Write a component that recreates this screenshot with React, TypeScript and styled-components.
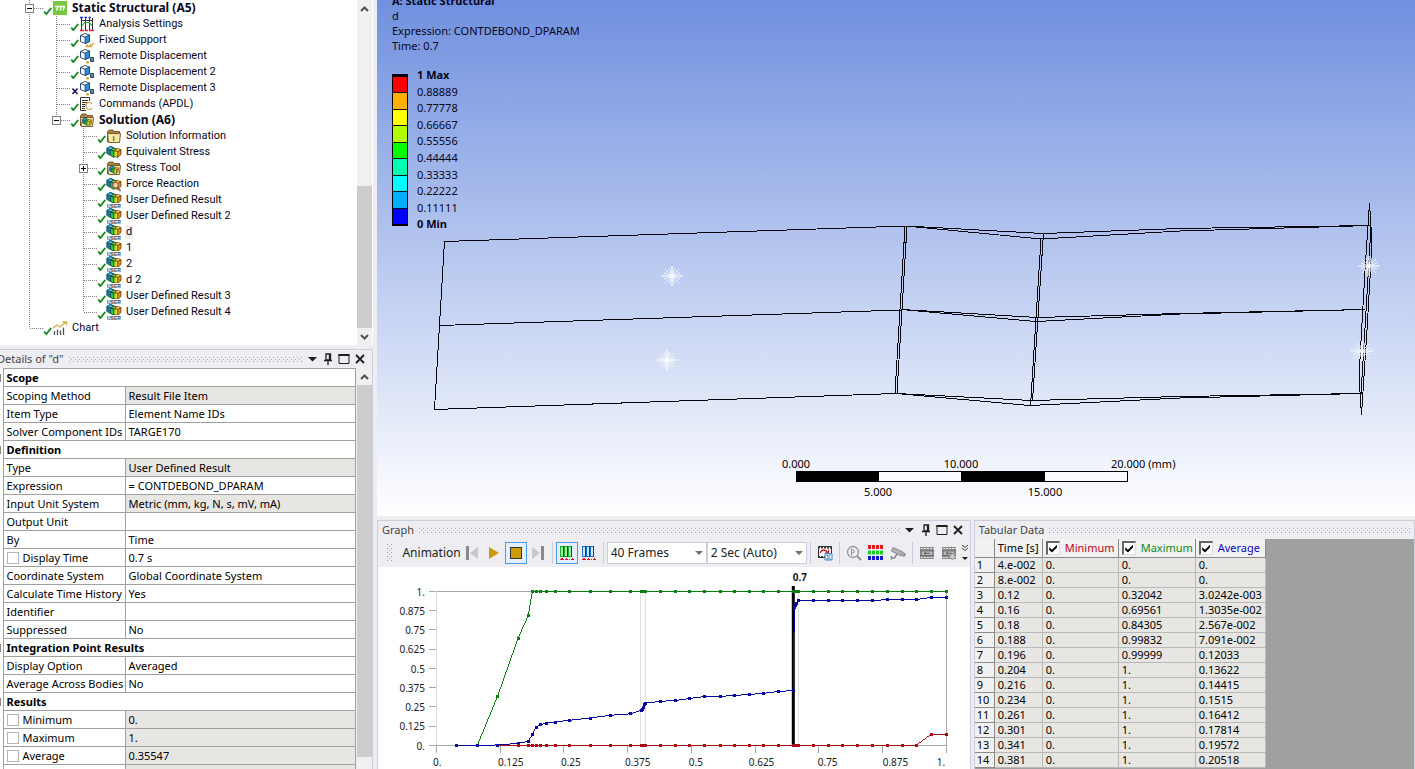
import React from 'react';
import styled, { createGlobalStyle } from 'styled-components';

const SHELL = '#eeeef2';
const LINE = '#cccedb';
const GRID = '#a0a0a0';

const GlobalStyle = createGlobalStyle`
  *, *::before, *::after { box-sizing: border-box; }
  html, body { margin: 0; height: 100%; overflow: hidden; }
  body { background: ${SHELL}; color: #000; font: 11px/16px "Noto Sans", "Open Sans", sans-serif; }
  button { font: inherit; color: inherit; margin: 0; padding: 0; border: 0; background: none; }
  svg { display: block; }
`;

const Shell = styled.div`
  display: flex;
  gap: 4px;
  height: 100vh;
  overflow: hidden;
`;

const Sidebar = styled.aside`
  display: flex;
  flex-direction: column;
  flex: 0 0 373px;
  gap: 4px;
  min-height: 0;
`;

const Workspace = styled.main`
  display: flex;
  flex-direction: column;
  flex: 1;
  gap: 4px;
  min-width: 0;
`;

/* ---------- scroll bar ---------- */

const Track = styled.div`
  display: flex;
  flex-direction: column;
  flex: 0 0 15px;
  background: #f0f0f0;
`;
const ScrollButton = styled.button`
  display: flex;
  align-items: center;
  justify-content: center;
  flex: 0 0 17px;
`;
const ThumbArea = styled.div<{ $before: number; $after: number }>`
  flex: 1;
  display: flex;
  padding: ${p => p.$before}px 0 ${p => p.$after}px;
`;
const Thumb = styled.div`
  flex: 1;
  background: #cdcdcd;
`;

function ScrollBar({ before, after, label, open }: { before: number; after: number; label: string; open?: boolean }) {
  return (
    <Track>
      <ScrollButton aria-label={`Scroll ${label} up`}>
        <svg width="9" height="6" viewBox="0 0 9 6"><path d="M1 5 4.500 1.500 8 5" fill="none" stroke="#505050" strokeWidth="2" /></svg>
      </ScrollButton>
      <ThumbArea $before={before} $after={after}><Thumb /></ThumbArea>
      {!open && (
        <ScrollButton aria-label={`Scroll ${label} down`}>
          <svg width="9" height="6" viewBox="0 0 9 6"><path d="M1 1 4.500 4.500 8 1" fill="none" stroke="#505050" strokeWidth="2" /></svg>
        </ScrollButton>
      )}
    </Track>
  );
}

/* ---------- outline tree ---------- */

const TreePanel = styled.section`
  display: flex;
  flex: 0 0 auto;
  padding-right: 1px;
  background: #fff;
`;
const TreeList = styled.ul`
  flex: 1;
  margin: 0;
  padding: 0 0 9px 16px;
  list-style: none;
  background: #fff;
`;
const TreeRow = styled.li`
  display: flex;
  align-items: center;
  height: 16px;
`;
const Status = styled.span`
  flex: 0 0 9px;
`;
const IconCell = styled.span`
  flex: 0 0 16px;
  margin-right: 3px;
`;
const TreeLabel = styled.span<{ $bold?: boolean; $selected?: boolean }>`
  padding: 0 1px;
  font: ${p => (p.$bold ? '700 12px/14px "Noto Sans"' : '400 11px/14px Roboto')}, sans-serif;
  color: #08081c;
  white-space: nowrap;
  background: ${p => (p.$selected ? '#efefef' : 'transparent')};
`;

function Branch({ up, down, across, box }: { up?: boolean; down?: boolean; across?: boolean; box?: '+' | '-' }) {
  return (
    <svg width="27" height="16" viewBox="0 0 27 16" shapeRendering="crispEdges">
      <g stroke="#808080" strokeDasharray="1 1">
        {up && <path d="M13.500 0V8" />}
        {down && <path d="M13.500 8V16" />}
        {across && <path d="M14 8.500H27" />}
      </g>
      {box && (
        <g>
          <rect x="9.500" y="4.500" width="8" height="8" fill="#fff" stroke="#808080" />
          <path d={box === '+' ? 'M11 8.500H16M13.500 6V11' : 'M11 8.500H16'} stroke="#000" />
        </g>
      )}
    </svg>
  );
}

const Tick = () => (
  <svg width="9" height="16" viewBox="0 0 9 16"><path d="M1.200 11.500 3.300 14 8.200 8" fill="none" stroke="#168a22" strokeWidth="1.900" /></svg>
);
const Cross = () => (
  <svg width="9" height="16" viewBox="0 0 9 16"><path d="M2.500 8.500 7.500 14M7.500 8.500 2.500 14" fill="none" stroke="#14145e" strokeWidth="1.500" /></svg>
);

type IconKind = 'static' | 'settings' | 'fixed' | 'remote' | 'commands' | 'solution' | 'info' | 'stress' | 'force' | 'user' | 'chart';

const Blocks = () => (
  <g strokeWidth=".8" strokeLinejoin="round">
    <path d="M.8 3.500 4.500 1.500 8 3 8 9 4.800 10.500.8 8.500Z" fill="#1378b4" stroke="#0b3f68" />
    <path d="M.8 3.500 4.500 1.500 8 3 4.500 5Z" fill="#43bfe0" stroke="#0b3f68" />
    <path d="M4.500 5 8 3 11 4 8 6Z" fill="#6adf4c" stroke="#174f24" />
    <path d="M4.500 5 8 6.500V12.500L4.500 10.500Z" fill="#2bc43f" stroke="#174f24" />
    <path d="M11.500 6.500 15 4.500V9.500L11.500 12.500Z" fill="#e78a16" stroke="#6d3d0a" />
    <path d="M8 5.500 11 3.500 15 4.500 12 6.500Z" fill="#f5d93b" stroke="#6d3d0a" />
    <path d="M8 5.800 11.700 6.500V12.300L8 11.500Z" fill="#c4e633" stroke="#4a5511" />
  </g>
);

const Cube = () => (
  <g strokeLinejoin="round">
    <path d="M1.500 3.500 5.500 1.500 10.500 3V9.500L6.500 11.500 1.500 9.500Z" fill="#fff" stroke="#274a6c" />
    <path d="M6 5.200 10.500 3V9.500L6.200 11.500Z" fill="#2f8fd8" stroke="#274a6c" />
    <path d="M1.500 3.500 6 5.200" stroke="#274a6c" />
  </g>
);

const Folder = () => (
  <g>
    <path d="M1.500 14V3.500L3 2H7L8 3.500H13.500V5" fill="#a88245" stroke="#7b5d2c" />
    <path d="M1.500 5.500H14.500L13.500 14.500H2.500Z" fill="#f8e6a4" stroke="#7b5d2c" />
  </g>
);

function TreeIcon({ kind }: { kind: IconKind }) {
  return (
    <svg width="16" height="16" viewBox="0 0 16 16" fill="none" fontFamily='"Liberation Sans", sans-serif' fontWeight="700">
      {kind === 'static' && (
        <g>
          <rect x="1" y="1" width="14" height="14" fill="#76c83c" />
          <path d="M3 6.500H13M6 6.500 4.500 10.500M9.500 6.500 8 10.500M12.500 6.500 11 10.500" stroke="#fff" strokeWidth="1.300" />
        </g>
      )}
      {kind === 'settings' && (
        <g>
          <path d="M2.500 2V14M6.500 2V14M10.500 2V14M13.500 2V14M2.500 4.500H13.500" stroke="#333" />
          <path d="M1 1.500H4M5.500 1.500H8M9.500 1.500H12" stroke="#2233cc" strokeWidth="1.500" />
          <path d="M3 10 5.500 6.500H10.500L13 10" stroke="#22bb44" strokeWidth="1.200" />
          <path d="M1 14.500H5M6 14.500H9M10 14.500H15" stroke="#dd2233" strokeWidth="1.500" />
        </g>
      )}
      {kind === 'fixed' && (
        <g><Cube /><path d="M6.500 15 9 12.500M9.500 15 12 12.500M12 14 15 11M7 14.500H13" stroke="#d9a53c" strokeWidth="1.300" /></g>
      )}
      {kind === 'remote' && (
        <g><Cube /><rect x="11.500" y="9.500" width="3" height="4" fill="#5c86ad" stroke="#31567c" /><path d="M8.500 13V15.500M7 14.500H10" stroke="#d9a53c" strokeWidth="1.700" /></g>
      )}
      {kind === 'commands' && (
        <g>
          <path d="M7 14.500H1.500V1.500H10.500V5" stroke="#333" />
          <path d="M3 4.500H9M3 6.500H8M3 8.500H6.500M3 10.500H6M3 12.500H6" stroke="#333" />
          <text x="6" y="14" fontSize="11" fontWeight="400" fill="#d09a30">C</text>
        </g>
      )}
      {(kind === 'solution' || kind === 'info') && <Folder />}
      {kind === 'solution' && <g transform="translate(3 5) scale(.64 .68)"><Blocks /></g>}
      {kind === 'info' && <text x="6.500" y="13" fontSize="8" fill="#6a5a2c">i</text>}
      {(kind === 'stress' || kind === 'force') && <g transform="translate(0 1)"><Blocks /></g>}
      {kind === 'force' && (
        <g><circle cx="9.500" cy="9" r="3" fill="#f6d9d9" fillOpacity=".7" stroke="#a04848" /><path d="M11.500 11.500 14.500 15" stroke="#8a4a3a" strokeWidth="1.500" /></g>
      )}
      {kind === 'user' && (
        <g>
          <g transform="translate(0 -1)"><Blocks /></g>
          <rect x="1" y="11" width="14" height="5" fill="#fff" />
          <text x="1" y="15.500" fontSize="5" fill="#333a45">USER</text>
        </g>
      )}
      {kind === 'chart' && (
        <g>
          <path d="M2.500 15V11M5.500 15V9.500M8.500 15V10.500M11.500 15V7.500" stroke="#555" strokeWidth="1.300" />
          <path d="M1 8 5 5 8 7 14 2M10.500 2H14.500V5" stroke="#d9a94c" strokeWidth="1.300" />
        </g>
      )}
    </svg>
  );
}

interface Node { label: string; depth: 1 | 2 | 3; icon: IconKind; bold?: boolean; box?: '+' | '-'; last?: boolean; off?: boolean; selected?: boolean }

const NODES: Node[] = [
  { label: 'Static Structural (A5)', depth: 1, icon: 'static', bold: true, box: '-' },
  { label: 'Analysis Settings', depth: 2, icon: 'settings' },
  { label: 'Fixed Support', depth: 2, icon: 'fixed' },
  { label: 'Remote Displacement', depth: 2, icon: 'remote' },
  { label: 'Remote Displacement 2', depth: 2, icon: 'remote' },
  { label: 'Remote Displacement 3', depth: 2, icon: 'remote', off: true },
  { label: 'Commands (APDL)', depth: 2, icon: 'commands' },
  { label: 'Solution (A6)', depth: 2, icon: 'solution', bold: true, box: '-', last: true },
  { label: 'Solution Information', depth: 3, icon: 'info' },
  { label: 'Equivalent Stress', depth: 3, icon: 'stress' },
  { label: 'Stress Tool', depth: 3, icon: 'solution', box: '+' },
  { label: 'Force Reaction', depth: 3, icon: 'force' },
  { label: 'User Defined Result', depth: 3, icon: 'user' },
  { label: 'User Defined Result 2', depth: 3, icon: 'user' },
  { label: 'd', depth: 3, icon: 'user', selected: true },
  { label: '1', depth: 3, icon: 'user' },
  { label: '2', depth: 3, icon: 'user' },
  { label: 'd 2', depth: 3, icon: 'user' },
  { label: 'User Defined Result 3', depth: 3, icon: 'user' },
  { label: 'User Defined Result 4', depth: 3, icon: 'user', last: true },
  { label: 'Chart', depth: 1, icon: 'chart', last: true },
];

function Outline() {
  return (
    <TreePanel aria-label="Outline">
      <TreeList>
        {NODES.map(n => (
          <TreeRow key={n.label}>
            {n.depth > 1 && <Branch up down />}
            {n.depth > 2 && <Branch />}
            <Branch up down={!n.last} across box={n.box} />
            <Status>{n.off ? <Cross /> : <Tick />}</Status>
            <IconCell><TreeIcon kind={n.icon} /></IconCell>
            <TreeLabel $bold={n.bold} $selected={n.selected}>{n.label}</TreeLabel>
          </TreeRow>
        ))}
      </TreeList>
      <ScrollBar before={169} after={0} label="outline" />
    </TreePanel>
  );
}

/* ---------- docked panel header ---------- */

const Panel = styled.section<{ $grow?: boolean }>`
  display: flex;
  flex-direction: column;
  flex: ${p => (p.$grow ? '1 1 0' : '0 0 auto')};
  min-width: 0;
  min-height: 0;
  border: solid ${LINE};
  border-width: 1px 1px 0 0;
  overflow: hidden;
`;
const PanelHead = styled.header`
  display: flex;
  align-items: center;
  flex: 0 0 18px;
  padding: 0 4px;
  color: #444;
`;
const PanelTitle = styled.h2<{ $cut?: boolean }>`
  margin: 0 5px 0 ${p => (p.$cut ? '-7px' : '0')};
  font: 400 11px/18px "Noto Sans", sans-serif;
  white-space: nowrap;
`;
const Dots = styled.span`
  flex: 1;
  height: 5px;
  background-image: linear-gradient(90deg, #a9a9b2 1px, transparent 1px), linear-gradient(90deg, #a9a9b2 1px, transparent 1px), linear-gradient(90deg, #a9a9b2 1px, transparent 1px);
  background-size: 4px 1px;
  background-position: 0 0, 2px 2px, 0 4px;
  background-repeat: repeat-x;
`;
const HeadButtons = styled.div`
  display: flex;
  margin-left: 1px;
`;
const HeadButton = styled.button`
  display: grid;
  place-items: center;
  width: 16px;
  height: 16px;
`;

function WindowButtons() {
  return (
    <HeadButtons>
      <HeadButton aria-label="Window options"><svg width="9" height="5" viewBox="0 0 9 5"><path d="M0 0H9L4.500 4.500Z" fill="#1e1e1e" /></svg></HeadButton>
      <HeadButton aria-label="Pin"><svg width="10" height="12" viewBox="0 0 10 12"><path d="M3 1H7.500V7H3ZM6.500 1V7M1 7.500H9M5 8V12" fill="none" stroke="#1e1e1e" strokeWidth="1.300" /></svg></HeadButton>
      <HeadButton aria-label="Maximize"><svg width="12" height="10" viewBox="0 0 12 10"><path d="M1 0V9.500H11V1" fill="none" stroke="#1e1e1e" /><path d="M.5 1H11.500" stroke="#1e1e1e" strokeWidth="2" /></svg></HeadButton>
      <HeadButton aria-label="Close"><svg width="10" height="10" viewBox="0 0 10 10"><path d="M1 1 9 9M9 1 1 9" stroke="#1e1e1e" strokeWidth="1.800" /></svg></HeadButton>
    </HeadButtons>
  );
}

/* ---------- details ---------- */

const DetailsBody = styled.div`
  display: flex;
  flex: 1;
  min-height: 0;
`;
const DetailsScroll = styled.div`
  flex: 1;
  overflow: hidden;
  margin-right: 1px;
  background: #fff;
`;
const DetailsTable = styled.table`
  width: 100%;
  table-layout: fixed;
  border-collapse: collapse;
  font: 11px/16px "Noto Sans", sans-serif;
  th, td { height: 18px; padding: 0 0 0 3px; border: 1px solid ${GRID}; text-align: left; font-weight: 400; white-space: nowrap; }
`;
const Gutter = styled.col` width: 3px; `;
const NameCol = styled.col` width: 122px; `;
const Mark = styled.td<{ $on?: boolean }>`
  && { padding: 0; border-width: 0 1px 0 0; }
  background: ${p => (p.$on ? 'linear-gradient(#8b8680, #8b8680) 0 50% / 1px 8px no-repeat' : '#fff')};
`;
const GroupCell = styled.th` && { font-weight: 700; } `;
const ValueCell = styled.td<{ $locked?: boolean }>`
  background: ${p => (p.$locked ? '#e7e6e3' : '#fff')};
`;
const CheckLabel = styled.label`
  display: flex;
  align-items: center;
  gap: 4px;
`;
const SmallCheck = styled.input`
  appearance: none;
  width: 12px;
  height: 12px;
  margin: 0;
  border: 1px solid #b4b4b4;
  background: #fff;
`;

type Detail = string | [string, string, ('locked' | 'check' | 'both')?];
const DETAILS: Detail[] = [
  'Scope',
  ['Scoping Method', 'Result File Item', 'locked'],
  ['Item Type', 'Element Name IDs'],
  ['Solver Component IDs', 'TARGE170'],
  'Definition',
  ['Type', 'User Defined Result', 'locked'],
  ['Expression', '= CONTDEBOND_DPARAM'],
  ['Input Unit System', 'Metric (mm, kg, N, s, mV, mA)', 'locked'],
  ['Output Unit', ''],
  ['By', 'Time'],
  ['Display Time', '0.7 s', 'check'],
  ['Coordinate System', 'Global Coordinate System'],
  ['Calculate Time History', 'Yes'],
  ['Identifier', ''],
  ['Suppressed', 'No'],
  'Integration Point Results',
  ['Display Option', 'Averaged'],
  ['Average Across Bodies', 'No'],
  'Results',
  ['Minimum', '0.', 'both'],
  ['Maximum', '1.', 'both'],
  ['Average', '0.35547', 'both'],
  ['', '', 'locked'],
];

function Details() {
  return (
    <Panel $grow aria-label="Details">
      <PanelHead>
        <PanelTitle $cut>Details of "d"</PanelTitle>
        <Dots />
        <WindowButtons />
      </PanelHead>
      <DetailsBody>
        <DetailsScroll>
          <DetailsTable>
            <colgroup><Gutter /><NameCol /><col /></colgroup>
            <tbody>
              {DETAILS.map((d, i) =>
                typeof d === 'string' ? (
                  <tr key={i}><Mark $on /><GroupCell colSpan={2}>{d}</GroupCell></tr>
                ) : (
                  <tr key={i}>
                    <Mark />
                    <th scope="row">
                      {d[2] === 'check' || d[2] === 'both' ? <CheckLabel><SmallCheck type="checkbox" />{d[0]}</CheckLabel> : d[0]}
                    </th>
                    <ValueCell $locked={d[2] === 'locked' || d[2] === 'both'}>{d[1]}</ValueCell>
                  </tr>
                )
              )}
            </tbody>
          </DetailsTable>
        </DetailsScroll>
        <ScrollBar before={0} after={12} label="details" open />
      </DetailsBody>
    </Panel>
  );
}

/* ---------- 3D view ---------- */

const View = styled.section`
  display: grid;
  flex: 1;
  min-height: 0;
  overflow: hidden;
  background: linear-gradient(#7090df, #fff);
  > * { grid-area: 1 / 1; }
`;
const Scene = styled.svg`
  width: 100%;
  height: 100%;
  min-height: 0;
`;
const Overlay = styled.div`
  justify-self: start;
  align-self: start;
  z-index: 1;
  margin-top: -7px;
  padding-left: 15px;
  font: 11px/15px "Noto Sans", sans-serif;
  color: #06061c;
`;
const OverlayTitle = styled.h1`
  margin: 0;
  font: 700 11px/15px "Noto Sans", sans-serif;
`;
const OverlayLine = styled.p` margin: 0; `;
const Legend = styled.div`
  display: flex;
  gap: 9px;
  height: 166px;
  margin-top: 14px;
`;
const LegendBar = styled.div`
  display: flex;
  flex-direction: column;
  width: 16px;
  margin: 7px 0;
  border: 1px solid #000;
  border-width: 3px 1px 2px;
`;
const Swatch = styled.span<{ $color: string }>`
  flex: 1;
  background: ${p => p.$color};
  & + & { border-top: 1px solid #101010; }
`;
const LegendLabels = styled.ol`
  display: flex;
  flex-direction: column;
  margin: 0;
  padding: 0;
  list-style: none;
`;
const LegendLabel = styled.li`
  flex: 1;
  &:first-child, &:last-child { font-weight: 700; }
`;

const COLORS = ['#ff0000', '#ffb000', '#ffff00', '#b0ff00', '#00ff00', '#00ffb0', '#00ffff', '#00b0ff', '#0000ff'];
const LEVELS = ['1 Max', '0.88889', '0.77778', '0.66667', '0.55556', '0.44444', '0.33333', '0.22222', '0.11111', '0 Min'];

const Star = ({ x, y }: { x: number; y: number }) => (
  <g transform={`translate(${x} ${y})`} stroke="#fff">
    <path d="M-11 0H11M0 -10V10" strokeWidth="1.200" />
    <path d="M-7 -7 7 7M-7 7 7 -7M-3 -8 3 8M3 -8-3 8M-8-3 8 3M-8 3 8-3" strokeWidth=".8" />
  </g>
);

function Viewport() {
  return (
    <View aria-label="Geometry view">
      <Scene viewBox="377 0 1038 516" fontFamily='"Noto Sans", sans-serif' fontSize="11">
        <g fill="none" stroke="#05050f" shapeRendering="crispEdges">
          <path d="M444.500 241.500 906 226M440 325.500 901 310M434 409.500 896 393.500M444.500 241 434.500 409" />
          <path d="M905 226 895 393M907 226 897 393" />
          <path d="M906 226 1043 233.500 1180 228.500 1371 225.500M906 226 1041 239 1180 231 1371 225.500" />
          <path d="M901 309.500 1037 317.500 1180 313.500 1365 309.500M901 309.500 1036 321.500 1180 314 1365 309.500" />
          <path d="M896 393.500 1032 400.500 1180 396.500 1361 393.500M896 393.500 1030 405.500 1180 398 1361 393.500" />
          <path d="M1043.500 233 1032.500 401M1041 239 1030.500 406" />
          <path d="M1369.500 203 1372 243 1367 330 1361.500 415 1359 377 1365 270ZM1371 226 1364 345 1361 394" />
        </g>
        <Star x={672} y={276} />
        <Star x={667} y={360} />
        <Star x={1369} y={266} />
        <Star x={1362} y={351} />
        <g shapeRendering="crispEdges">
          <rect x="796.500" y="471.500" width="331" height="10" fill="#fbfbff" stroke="#000" />
          <path d="M796 471H879V482H796ZM961 471H1045V482H961Z" />
        </g>
        <g textAnchor="middle">
          <text x="796" y="468">0.000</text>
          <text x="961" y="468">10.000</text>
          <text x="878" y="496">5.000</text>
          <text x="1045" y="496">15.000</text>
        </g>
        <text x="1111" y="468">20.000 (mm)</text>
      </Scene>
      <Overlay>
        <OverlayTitle>A: Static Structural</OverlayTitle>
        <OverlayLine>d</OverlayLine>
        <OverlayLine>Expression: CONTDEBOND_DPARAM</OverlayLine>
        <OverlayLine>Time: 0.7</OverlayLine>
        <Legend>
          <LegendBar>{COLORS.map(c => <Swatch key={c} $color={c} />)}</LegendBar>
          <LegendLabels>{LEVELS.map(l => <LegendLabel key={l}>{l}</LegendLabel>)}</LegendLabels>
        </Legend>
      </Overlay>
    </View>
  );
}

/* ---------- graph ---------- */

const BottomDock = styled.div`
  display: flex;
  flex: 0 0 249px;
  gap: 3px;
  min-width: 0;
`;
const GraphPanel = styled(Panel)`
  flex: 594 1 0;
  border-left-width: 1px;
`;
const TablePanel = styled(Panel)`
  flex: 441 1 0;
  border-left-width: 1px;
`;
const Toolbar = styled.div`
  display: flex;
  align-items: center;
  flex: 0 0 28px;
  padding: 0 0 1px 9px;
`;
const Grip = styled.span`
  width: 5px;
  height: 17px;
  margin-right: 11px;
  background-image: linear-gradient(#a0a0a8 1px, transparent 1px), linear-gradient(#a0a0a8 1px, transparent 1px), linear-gradient(#a0a0a8 1px, transparent 1px);
  background-size: 1px 4px;
  background-position: 0 0, 2px 2px, 4px 0;
  background-repeat: repeat-y;
`;
const ToolbarText = styled.span`
  width: 60px;
  font: 12px/18px "Noto Sans", sans-serif;
  color: #1e1e1e;
`;
const ToolGroup = styled.div`
  display: flex;
  align-items: center;
  & + & {
    margin-left: 3px;
    padding-left: 3px;
    border-left: 1px solid ${LINE};
  }
`;
const ToolButton = styled.button<{ $active?: boolean }>`
  display: grid;
  place-items: center;
  width: 22px;
  height: 22px;
  border: 1px solid ${p => (p.$active ? '#4a9bea' : 'transparent')};
  background: ${p => (p.$active ? '#e4effb' : 'transparent')};
`;
const SelectBox = styled.div`
  display: grid;
  align-items: center;
  flex: 0 0 100px;
  > * { grid-area: 1 / 1; }
  > svg { justify-self: end; margin-right: 4px; pointer-events: none; }
`;
const Select = styled.select`
  appearance: none;
  width: 100px;
  height: 22px;
  margin: 0;
  padding: 0 3px;
  border: 1px solid ${LINE};
  border-radius: 0;
  background: #fff;
  color: #1e1e1e;
  font: 12px/18px "Noto Sans", sans-serif;
`;
const MoreButton = styled.button`
  width: 10px;
  height: 22px;
  display: grid;
  place-items: center;
`;
const Plot = styled.div`
  flex: 1;
  min-height: 0;
  background: #fff;
`;

const Drop = () => <svg width="8" height="4" viewBox="0 0 8 4"><path d="M0 0H8L4 4Z" fill="#717171" /></svg>;

const Columns = ({ color, fill }: { color: string; fill: string }) => (
  <svg width="15" height="16" viewBox="0 0 15 16" fill="none" shapeRendering="crispEdges">
    <path d="M1 1H13V12H1Z" fill={fill} />
    <path d="M1.500 1.500H4.500V11.500H1.500ZM5.500 1.500H8.500V11.500H5.500ZM9.500 1.500H12.500V11.500H9.500Z" stroke={color} />
    <path d="M4.500 1V12M8.500 1V12M12.500 1V12" stroke="#2c3a3a" />
    <path d="M1 14.500H5M6 14.500H9M10 14.500H11M12 14.500H15" stroke="#dd1122" />
    <path d="M2 13.500H4M7 13.500H8M13 13.500H14" stroke="#dd1122" />
  </svg>
);

const FilmStrip = ({ badge }: { badge?: boolean }) => (
  <svg width="16" height="14" viewBox="0 0 16 14">
    <path d="M1 1H15V13H1Z" fill="#8b8b8b" />
    <path d="M2 2.500H15M2 11.500H15" stroke="#eee" strokeDasharray="2 1" />
    <path d="M1 5H15M1 9.500H15" stroke="#6e6e6e" />
    <path d="M3 5.500H13V9H3Z" fill="#b9b9b9" />
    <path d="M5 7.300H11M5 7.300 7 6M5 7.300 7 8.500" stroke="#666" fill="none" />
    {badge && <circle cx="11.500" cy="10.500" r="2.800" fill="#ccc" stroke="#888" />}
  </svg>
);

const TIMES = [
  0.04, 0.08, 0.12, 0.16, 0.18, 0.188, 0.196, 0.204, 0.216, 0.234, 0.261, 0.301, 0.341, 0.381, 0.401, 0.403, 0.405, 0.407, 0.409,
  0.439, 0.469, 0.497, 0.526, 0.556, 0.585, 0.614, 0.642, 0.671, 0.7, 0.702, 0.704, 0.706, 0.709,
  0.739, 0.768, 0.796, 0.825, 0.854, 0.884, 0.913, 0.941, 0.97, 1,
];
const AVERAGE = [
  0, 0, 0.003, 0.013, 0.026, 0.071, 0.12, 0.136, 0.144, 0.152, 0.164, 0.178, 0.196, 0.205, 0.229, 0.235, 0.25, 0.265, 0.275,
  0.286, 0.292, 0.305, 0.318, 0.318, 0.325, 0.331, 0.338, 0.351, 0.357, 0.893, 0.91, 0.925, 0.939,
  0.939, 0.939, 0.939, 0.939, 0.939, 0.948, 0.948, 0.948, 0.961, 0.961,
];
const MAXIMUM = TIMES.map((_, i) => [0, 0, 0.32, 0.696, 0.843, 0.998][i] ?? 1);
const MINIMUM = TIMES.map((_, i) => (i > TIMES.length - 3 ? 0.071 : 0));

const px = (t: number) => 58.5 + t * 510;
const py = (v: number) => 178.5 - v * 154;

function Series({ values, color, from = 0, to = values.length }: { values: number[]; color: string; from?: number; to?: number }) {
  const points = values.slice(from, to).map((v, i) => [px(TIMES[i + from]), py(v)]);
  return (
    <g>
      <polyline points={points.map(p => p.join(',')).join(' ')} fill="none" stroke={color} />
      {points.map(([x, y], i) => <rect key={i} x={Math.round(x - 1.5)} y={Math.round(y - 1.5)} width="3" height="3" fill={color} />)}
    </g>
  );
}

const Y_TICKS = ['0.', '0.125', '0.25', '0.375', '0.5', '0.625', '0.75', '0.875', '1.'];
const X_LABELS = [55, 120, 183, 247, 311, 371, 440, 505, 559];

function Chart() {
  return (
    <svg width="100%" height="100%" viewBox="0 0 592 202" preserveAspectRatio="xMinYMin meet" fontFamily='"Noto Sans", sans-serif' fontSize="10" fill="#1a1a1a">
      <g stroke="#a8a8a8" shapeRendering="crispEdges">
        <path d="M51 24.500H569M51 178.500H569M568.500 24V186" />
        <path d="M58.500 24V186" stroke="#dcdcdc" />
        {Y_TICKS.map((_, i) => <path key={i} d={`M51 ${py(i / 8)}H58M${px(i / 8)} 178V186`} />)}
        <path d="M262.500 24V178M267.500 24V178M420.500 24V178" stroke="#e0e0e0" />
      </g>
      <g textAnchor="end">
        {Y_TICKS.map((t, i) => <text key={t} x="47" y={Math.round(py(i / 8)) + 4}>{t}</text>)}
      </g>
      {Y_TICKS.map((t, i) => <text key={t} x={X_LABELS[i]} y="199">{t}</text>)}
      <rect x="414" y="19" width="3" height="160" fill="#000" />
      <g shapeRendering="crispEdges">
        <Series values={MAXIMUM} color="#0a7d14" from={1} />
        <Series values={AVERAGE} color="#0606a0" />
        <Series values={MINIMUM} color="#a80a18" from={2} />
        <Series values={AVERAGE} color="#0606a0" to={3} />
      </g>
      <text x="415" y="14" fontWeight="700">0.7</text>
    </svg>
  );
}

function Graph() {
  return (
    <GraphPanel aria-label="Graph">
      <PanelHead>
        <PanelTitle>Graph</PanelTitle>
        <Dots />
        <WindowButtons />
      </PanelHead>
      <Toolbar>
        <Grip />
        <ToolbarText>Animation</ToolbarText>
        <ToolGroup>
          <ToolButton aria-label="Previous frame"><svg width="14" height="14" viewBox="0 0 14 14"><path d="M1 0H4V14H1Z" fill="#8a8a8a" /><path d="M13 1V13L5 7Z" fill="#c8c8c8" /></svg></ToolButton>
          <ToolButton aria-label="Play"><svg width="12" height="14" viewBox="0 0 12 14"><path d="M1 1 11 7 1 13Z" fill="#cf9a0a" /></svg></ToolButton>
          <ToolButton aria-label="Stop" $active><svg width="12" height="12" viewBox="0 0 12 12"><rect x=".5" y=".5" width="11" height="11" fill="#cf9a0a" stroke="#333" /></svg></ToolButton>
          <ToolButton aria-label="Next frame"><svg width="14" height="14" viewBox="0 0 14 14"><path d="M10 0H13V14H10Z" fill="#8a8a8a" /><path d="M1 1V13L9 7Z" fill="#c8c8c8" /></svg></ToolButton>
        </ToolGroup>
        <ToolGroup>
          <ToolButton aria-label="Distributed" $active><Columns color="#19b02a" fill="#a6f0ae" /></ToolButton>
          <ToolButton aria-label="Result sets"><Columns color="#1c6fd0" fill="#c7ecfb" /></ToolButton>
        </ToolGroup>
        <ToolGroup>
          <SelectBox><Select aria-label="Frames"><option>40 Frames</option></Select><Drop /></SelectBox>
          <SelectBox><Select aria-label="Duration"><option>2 Sec (Auto)</option></Select><Drop /></SelectBox>
        </ToolGroup>
        <ToolGroup>
          <ToolButton aria-label="Export video">
            <svg width="16" height="16" viewBox="0 0 16 16" fill="none">
              <path d="M1.500 1.500H14.500V12.500H1.500Z" fill="#fff" stroke="#333" />
              <path d="M1 2.500H15M1 12H8" stroke="#333" strokeWidth="2" strokeDasharray="2 1" />
              <path d="M3 8C5 3.500 9 4.500 11 8M11.500 4.500V8H8.500" stroke="#d51f2c" strokeWidth="1.300" />
              <path d="M8 8.500H15V15H8ZM10 9V11H13V9M10 15V13H13V15" fill="#fff" stroke="#3a86d0" />
            </svg>
          </ToolButton>
        </ToolGroup>
        <ToolGroup>
          <ToolButton aria-label="Zoom">
            <svg width="16" height="16" viewBox="0 0 16 16" fill="none" stroke="#949494"><circle cx="7" cy="7" r="5.500" strokeWidth="1.300" /><path d="M11 11 15 15" strokeWidth="2" /><path d="M5.500 10.500V4L9 6.500 5.500 8.500" /></svg>
          </ToolButton>
          <ToolButton aria-label="Color bands">
            <svg width="15" height="15" viewBox="0 0 15 15" strokeWidth="4" strokeDasharray="3 1"><path d="M0 2H15" stroke="#e01818" /><path d="M0 7.500H15" stroke="#18d028" /><path d="M0 13H15" stroke="#1818c8" /></svg>
          </ToolButton>
          <ToolButton aria-label="Camera">
            <svg width="16" height="14" viewBox="0 0 16 14" fill="none" stroke="#8a8a8a"><path d="M3 1.500 13 6 11 10 1.500 5Z" fill="#b4b4b4" /><path d="M13 7 15 8 14 10 12 9M7 8 4.500 12H1M1.500 10V13.500" strokeWidth="1.500" /></svg>
          </ToolButton>
        </ToolGroup>
        <ToolGroup>
          <ToolButton aria-label="Film"><FilmStrip /></ToolButton>
          <ToolButton aria-label="Film settings"><FilmStrip badge /></ToolButton>
          <MoreButton aria-label="More tools">
            <svg width="8" height="17" viewBox="0 0 8 17"><path d="M1 1 4 3.500 7 1M1 4 4 6.500 7 4" fill="none" stroke="#444" /><path d="M1 13H7L4 16Z" fill="#1e1e1e" /></svg>
          </MoreButton>
        </ToolGroup>
      </Toolbar>
      <Plot><Chart /></Plot>
    </GraphPanel>
  );
}

/* ---------- tabular data ---------- */

const TableArea = styled.div`
  flex: 1;
  min-height: 0;
  overflow: hidden;
  background: #a0a0a0;
`;
const DataTable = styled.table`
  table-layout: fixed;
  width: 291px;
  border-collapse: separate;
  border-spacing: 0;
  font: 11px/14px "Noto Sans", sans-serif;
  background: #e7e6e3;
  td { height: 15px; padding: 0 0 0 3px; border: solid #b9b9b9; border-width: 0 1px 1px 0; white-space: nowrap; }
`;
const HeadCell = styled.th<{ $color?: string }>`
  height: 19px;
  padding: 0 2px 0 3px;
  border: solid #8a8a8a;
  border-width: 0 1px 1px 0;
  background: #f1f1f1;
  color: ${p => p.$color ?? '#000'};
  font-weight: 400;
  text-align: left;
  white-space: nowrap;
`;
const RowHead = styled.th`
  height: 15px;
  padding: 0 0 0 2px;
  border: solid #8a8a8a;
  border-width: 0 1px 1px 0;
  background: #f1f1f1;
  font-weight: 400;
  text-align: left;
`;
const HeadLabel = styled.label`
  display: flex;
  align-items: center;
  gap: 5px;
`;
const DataCheck = styled.input`
  appearance: none;
  display: grid;
  place-items: center;
  flex: 0 0 14px;
  height: 14px;
  margin: 0;
  border: 1px solid #ddd;
  border-top: 2px solid #666;
  border-left: 2px solid #666;
  background: #fff;
  &:checked::after {
    content: "";
    width: 8px;
    height: 8px;
    background: #000;
    clip-path: polygon(0 35%, 35% 65%, 100% 0, 100% 35%, 35% 100%, 0 70%);
  }
`;
const Col = styled.col<{ $w: number }>` width: ${p => p.$w}px; `;

const ROWS = [
  ['4.e-002', '0.', '0.', '0.'],
  ['8.e-002', '0.', '0.', '0.'],
  ['0.12', '0.', '0.32042', '3.0242e-003'],
  ['0.16', '0.', '0.69561', '1.3035e-002'],
  ['0.18', '0.', '0.84305', '2.567e-002'],
  ['0.188', '0.', '0.99832', '7.091e-002'],
  ['0.196', '0.', '0.99999', '0.12033'],
  ['0.204', '0.', '1.', '0.13622'],
  ['0.216', '0.', '1.', '0.14415'],
  ['0.234', '0.', '1.', '0.1515'],
  ['0.261', '0.', '1.', '0.16412'],
  ['0.301', '0.', '1.', '0.17814'],
  ['0.341', '0.', '1.', '0.19572'],
  ['0.381', '0.', '1.', '0.20518'],
];

function TabularData() {
  return (
    <TablePanel aria-label="Tabular Data">
      <PanelHead>
        <PanelTitle>Tabular Data</PanelTitle>
        <Dots />
      </PanelHead>
      <TableArea>
        <DataTable>
          <colgroup><Col $w={20} /><Col $w={48} /><Col $w={76} /><Col $w={77} /><Col $w={70} /></colgroup>
          <thead>
            <tr>
              <HeadCell />
              <HeadCell>Time [s]</HeadCell>
              <HeadCell $color="#c00020"><HeadLabel><DataCheck type="checkbox" defaultChecked />Minimum</HeadLabel></HeadCell>
              <HeadCell $color="#0a8a1a"><HeadLabel><DataCheck type="checkbox" defaultChecked />Maximum</HeadLabel></HeadCell>
              <HeadCell $color="#0a0ac0"><HeadLabel><DataCheck type="checkbox" defaultChecked />Average</HeadLabel></HeadCell>
            </tr>
          </thead>
          <tbody>
            {ROWS.map((r, i) => (
              <tr key={r[0]}>
                <RowHead scope="row">{i + 1}</RowHead>
                {r.map((c, j) => <td key={j}>{c}</td>)}
              </tr>
            ))}
          </tbody>
        </DataTable>
      </TableArea>
    </TablePanel>
  );
}

export default function App() {
  return (
    <>
      <GlobalStyle />
      <Shell>
        <Sidebar>
          <Outline />
          <Details />
        </Sidebar>
        <Workspace>
          <Viewport />
          <BottomDock>
            <Graph />
            <TabularData />
          </BottomDock>
        </Workspace>
      </Shell>
    </>
  );
}
